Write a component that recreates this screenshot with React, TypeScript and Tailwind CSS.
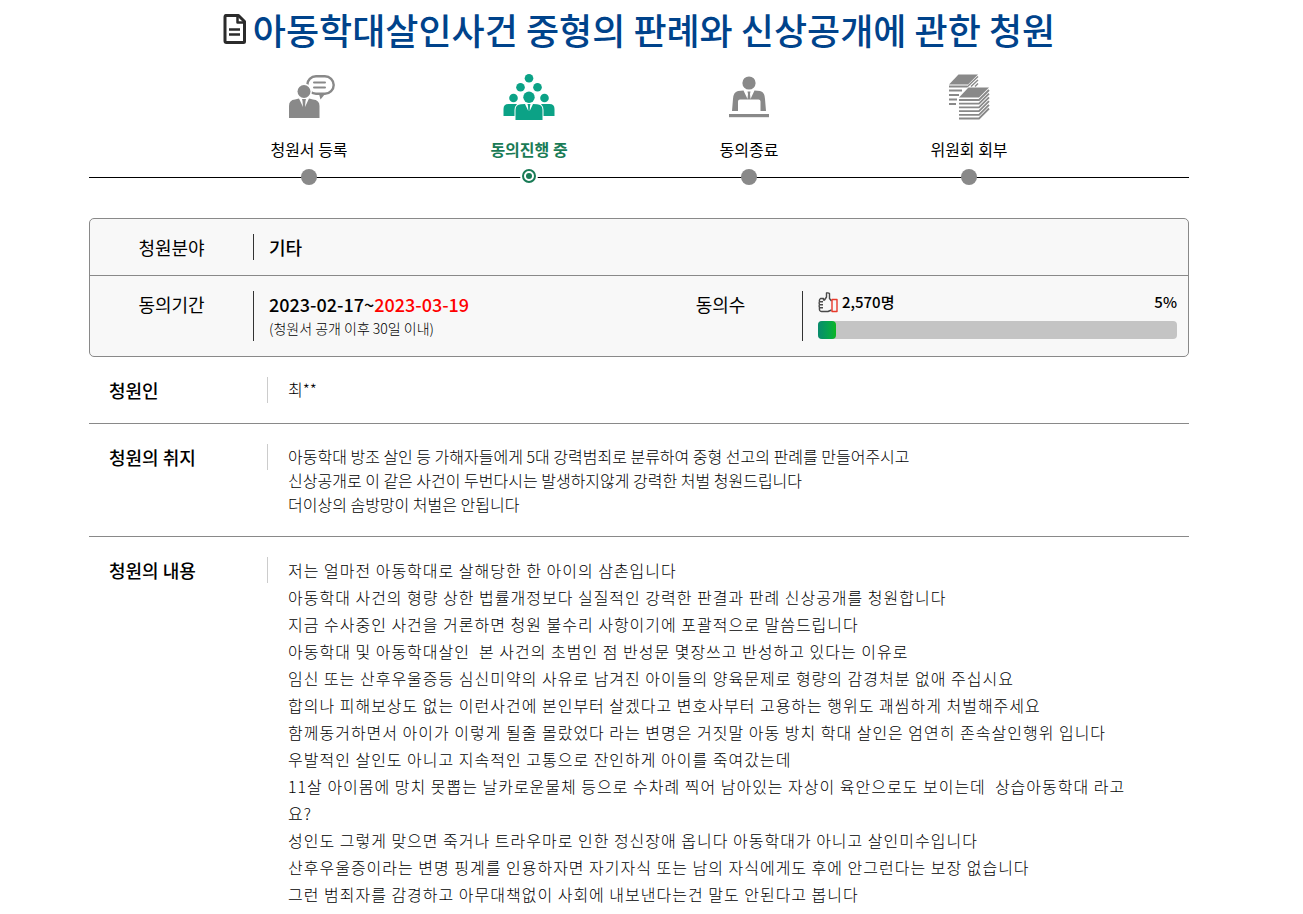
import type { ReactNode } from 'react';
import clsx from 'clsx';

interface Step {
  label: string;
  icon: ReactNode;
  active?: boolean;
}

const purpose = [
  '아동학대 방조 살인 등 가해자들에게 5대 강력범죄로 분류하여 중형 선고의 판례를 만들어주시고',
  '신상공개로 이 같은 사건이 두번다시는 발생하지않게 강력한 처벌 청원드립니다',
  '더이상의 솜방망이 처벌은 안됩니다',
];

const content = [
  '저는 얼마전 아동학대로 살해당한 한 아이의 삼촌입니다',
  '아동학대 사건의 형량 상한 법률개정보다 실질적인 강력한 판결과 판례 신상공개를 청원합니다',
  '지금 수사중인 사건을 거론하면 청원 불수리 사항이기에 포괄적으로 말씀드립니다',
  '아동학대 및 아동학대살인  본 사건의 초범인 점 반성문 몇장쓰고 반성하고 있다는 이유로',
  '임신 또는 산후우울증등 심신미약의 사유로 남겨진 아이들의 양육문제로 형량의 감경처분 없애 주십시요',
  '합의나 피해보상도 없는 이런사건에 본인부터 살겠다고 변호사부터 고용하는 행위도 괘씸하게 처벌해주세요',
  '함께동거하면서 아이가 이렇게 될줄 몰랐었다 라는 변명은 거짓말 아동 방치 학대 살인은 엄연히 존속살인행위 입니다',
  '우발적인 살인도 아니고 지속적인 고통으로 잔인하게 아이를 죽여갔는데',
  '11살 아이몸에 망치 못뽑는 날카로운물체 등으로 수차례 찍어 남아있는 자상이 육안으로도 보이는데  상습아동학대 라고요?',
  '성인도 그렇게 맞으면 죽거나 트라우마로 인한 정신장애 옵니다 아동학대가 아니고 살인미수입니다',
  '산후우울증이라는 변명 핑계를 인용하자면 자기자식 또는 남의 자식에게도 후에 안그런다는 보장 없습니다',
  '그런 범죄자를 감경하고 아무대책없이 사회에 내보낸다는건 말도 안된다고 봅니다',
];

function DocumentIcon() {
  return (
    <svg width="24" height="30" viewBox="0 0 24 30" fill="none" stroke="#2b2b2b" strokeWidth="3" strokeLinejoin="round" aria-hidden="true">
      <path d="M2.5 1.5H15.5L21.5 7.5V27.5Q21.5 28.5 20.5 28.5H3.5Q2 28.5 2 27V3Q2 1.5 3.5 1.5Z" />
      <path d="M14.5 2V8.5H21.5" strokeWidth="2.5" />
      <path d="M6 15.5H17M6 20.5H17" strokeWidth="2.5" />
    </svg>
  );
}

function RegisterIcon() {
  return (
    <svg width="54" height="46" viewBox="-6 0 54 46" aria-hidden="true">
      <rect x="19.2" y="2.2" width="26.5" height="17.6" rx="8.8" fill="none" stroke="#898989" strokeWidth="2.4" />
      <path d="M31 20H37L32.5 25.5Z" fill="#898989" />
      <path d="M26 8.5H37M26 13.5H37" stroke="#898989" strokeWidth="2" strokeLinecap="round" />
      <circle cx="16" cy="17.5" r="8" fill="#fff" />
      <circle cx="16" cy="17.5" r="6.5" fill="#898989" />
      <path d="M1 44V32Q1 26 7 25.5L11 24.5L15 33L14.5 27L14 25H18L17.5 27L17 33L21 24.5L25 25.5Q31.5 26 31.5 32V44Z" fill="#898989" />
    </svg>
  );
}

function AgreeIcon() {
  return (
    <svg width="52" height="48" viewBox="0 0 52 48" fill="#0ba286" aria-hidden="true">
      <circle cx="26" cy="5.2" r="4.3" />
      <circle cx="17.5" cy="14.2" r="4.3" />
      <circle cx="34.5" cy="14.2" r="4.3" />
      <circle cx="10.5" cy="25" r="4.3" />
      <circle cx="41.5" cy="25" r="4.3" />
      <path d="M0.5 43V36Q0.5 31 5.5 31H14Q11.5 33.5 11.5 37V43Z" />
      <path d="M51.5 43V36Q51.5 31 46.5 31H38Q40.5 33.5 40.5 37V43Z" />
      <circle cx="26" cy="24.2" r="5.7" />
      <path d="M12.5 47V37Q12.5 31.5 18 31.3L22 31L25.3 38L25 33L24.5 31H27.5L27 33L26.7 38L30 31L34 31.3Q39.5 31.5 39.5 37V47Z" />
    </svg>
  );
}

function ClosedIcon() {
  return (
    <svg width="42" height="44" viewBox="0 0 42 44" fill="#898989" aria-hidden="true">
      <circle cx="21" cy="8" r="6.6" />
      <path d="M4 36L5 24Q5.3 17 10 16L15.5 15.5L19.5 24L20 19L19.5 16.5H22.5L22 19L22.5 24L26.5 15.5L32 16Q36.7 17 37 24L38 36H32.5V26.5Q32.5 24.5 30.5 24.5H12Q10 24.5 10 26.5V36Z" />
      <rect x="1" y="39" width="40" height="3.2" />
    </svg>
  );
}

function CommitteeIcon() {
  return (
    <svg width="42" height="48" viewBox="0 0 42 48" fill="#898989" aria-hidden="true">
      <path d="M10.5 1.5H30L20 11.5H1Z" />
      <path d="M30 3.5L19 14M30 7L23 13.5M30 10.5L27 13.5" stroke="#898989" strokeWidth="1.4" />
      <path d="M1 13.5H19M1 17.5H14M1 22H11M1 26.5H9M1 31H8" stroke="#898989" strokeWidth="1.8" />
      <path d="M20.5 14.5H41L31 24.5H11Z" />
      <path d="M11 27H31L41 17M11 30.7H31L41 20.7M11 34.4H31L41 24.4M11 38.1H31L41 28.1M11 41.8H31L41 31.8M11 45.5H31L41 35.5" fill="none" stroke="#898989" strokeWidth="1.8" />
    </svg>
  );
}

function ThumbIcon() {
  return (
    <svg width="20" height="21" viewBox="0 0 20 21" fill="none" strokeWidth="1.4" strokeLinejoin="round" aria-hidden="true">
      <path d="M13.5 9L11.500 6.500V1.500Q10.500 0.500 8.500 1L8.500 5L6.500 8H5.500V6.500H2.500Q1 7.500 1.500 9.500Q0.800 11 1.500 12.500Q0.800 14 1.500 15.500Q1 19.500 3.500 19.500H10L13.500 18" stroke="#4a4a4a" />
      <path d="M2 9.800H5M2 12.800H5M2 15.800H5" stroke="#4a4a4a" />
      <path d="M14 7.500H19V19.500H14Z" stroke="#e8392b" />
    </svg>
  );
}

const steps: Step[] = [
  { label: '청원서 등록', icon: <RegisterIcon /> },
  { label: '동의진행 중', icon: <AgreeIcon />, active: true },
  { label: '동의종료', icon: <ClosedIcon /> },
  { label: '위원회 회부', icon: <CommitteeIcon /> },
];

function StepItem({ label, icon, active }: Step) {
  return (
    <li className="flex flex-col items-center" aria-current={active ? 'step' : undefined}>
      <div className="flex h-12 items-center">{icon}</div>
      <span className={clsx('mt-4 leading-6', active ? 'font-bold text-[#197b56]' : 'text-black')}>{label}</span>
      <span className="relative mt-2 flex h-4 w-4 justify-center">
        {active ? (
          <span className="flex h-3.5 w-3.5 shrink-0 items-center justify-center rounded-full border-2 border-[#197b56] bg-white ring-2 ring-white">
            <span className="h-1.5 w-1.5 rounded-full bg-[#197b56]" />
          </span>
        ) : (
          <span className="h-4 w-4 rounded-full bg-[#898989]" />
        )}
      </span>
    </li>
  );
}

function InfoCell({ label, children }: { label: string; children: ReactNode }) {
  return (
    <div className="flex flex-1 py-[15px]">
      <dt className="w-[163px] shrink-0 text-center text-lg leading-[26px]">{label}</dt>
      <dd className="flex-1 border-l border-[#333] pr-[11px] pl-[15px]">{children}</dd>
    </div>
  );
}

function Section({ title, children }: { title: string; children: ReactNode }) {
  return (
    <section className="flex border-b border-[#898989] py-5 last:border-b-0">
      <h2 className="h-[26px] w-[179px] shrink-0 border-r border-[#ccc] pl-5 text-lg leading-[26px] font-medium">{title}</h2>
      <div className="flex-1 pr-14 pl-5 font-light">{children}</div>
    </section>
  );
}

export default function App() {
  return (
    <div className="bg-white pr-[25px] font-['Noto_Sans_CJK_KR',sans-serif] text-base text-black">
      <main className="mx-auto max-w-[1100px]">
        <h1 className="flex items-center justify-center gap-1.5 pt-1 text-4xl leading-[50px] font-medium text-[#00438b]">
          <DocumentIcon />
          아동학대살인사건 중형의 판례와 신상공개에 관한 청원
        </h1>

        <div className="relative mt-[19px]">
          <div className="absolute inset-x-0 bottom-[7px] h-px bg-black" />
          <ol className="grid grid-cols-4 px-[10%]">
            {steps.map((step) => (
              <StepItem key={step.label} {...step} />
            ))}
          </ol>
        </div>

        <dl className="mt-[33px] rounded-[5px] border border-[#898989] bg-[#f8f8f8]">
          <div className="flex border-b border-[#898989]">
            <InfoCell label="청원분야">
              <span className="block text-lg leading-[26px] font-medium">기타</span>
            </InfoCell>
          </div>
          <div className="flex">
            <InfoCell label="동의기간">
              <span className="block text-lg leading-[26px] font-medium">
                2023-02-17~<span className="text-[#f00]">2023-03-19</span>
              </span>
              <span className="block text-sm leading-[22px] font-light">(청원서 공개 이후 30일 이내)</span>
            </InfoCell>
            <InfoCell label="동의수">
              <div className="flex h-[22px] items-center justify-between text-[15px] font-medium">
                <span className="flex items-center gap-1">
                  <ThumbIcon />
                  2,570명
                </span>
                <span>5%</span>
              </div>
              <div
                className="mt-2 mb-0.5 h-[18px] rounded bg-[#c4c4c4]"
                role="progressbar"
                aria-label="동의수"
                aria-valuenow={5}
                aria-valuemin={0}
                aria-valuemax={100}
              >
                <div className="h-full rounded bg-linear-to-r from-[#098b6c] to-[#0db51e]" style={{ width: '5%' }} />
              </div>
            </InfoCell>
          </div>
        </dl>

        <Section title="청원인">
          <p className="leading-6">최**</p>
        </Section>
        <Section title="청원의 취지">
          <p className="leading-6 whitespace-pre-wrap">{purpose.join('\n')}</p>
        </Section>
        <Section title="청원의 내용">
          <p className="leading-[27px] tracking-[1px] whitespace-pre-wrap">{content.join('\n')}</p>
        </Section>
      </main>
    </div>
  );
}
